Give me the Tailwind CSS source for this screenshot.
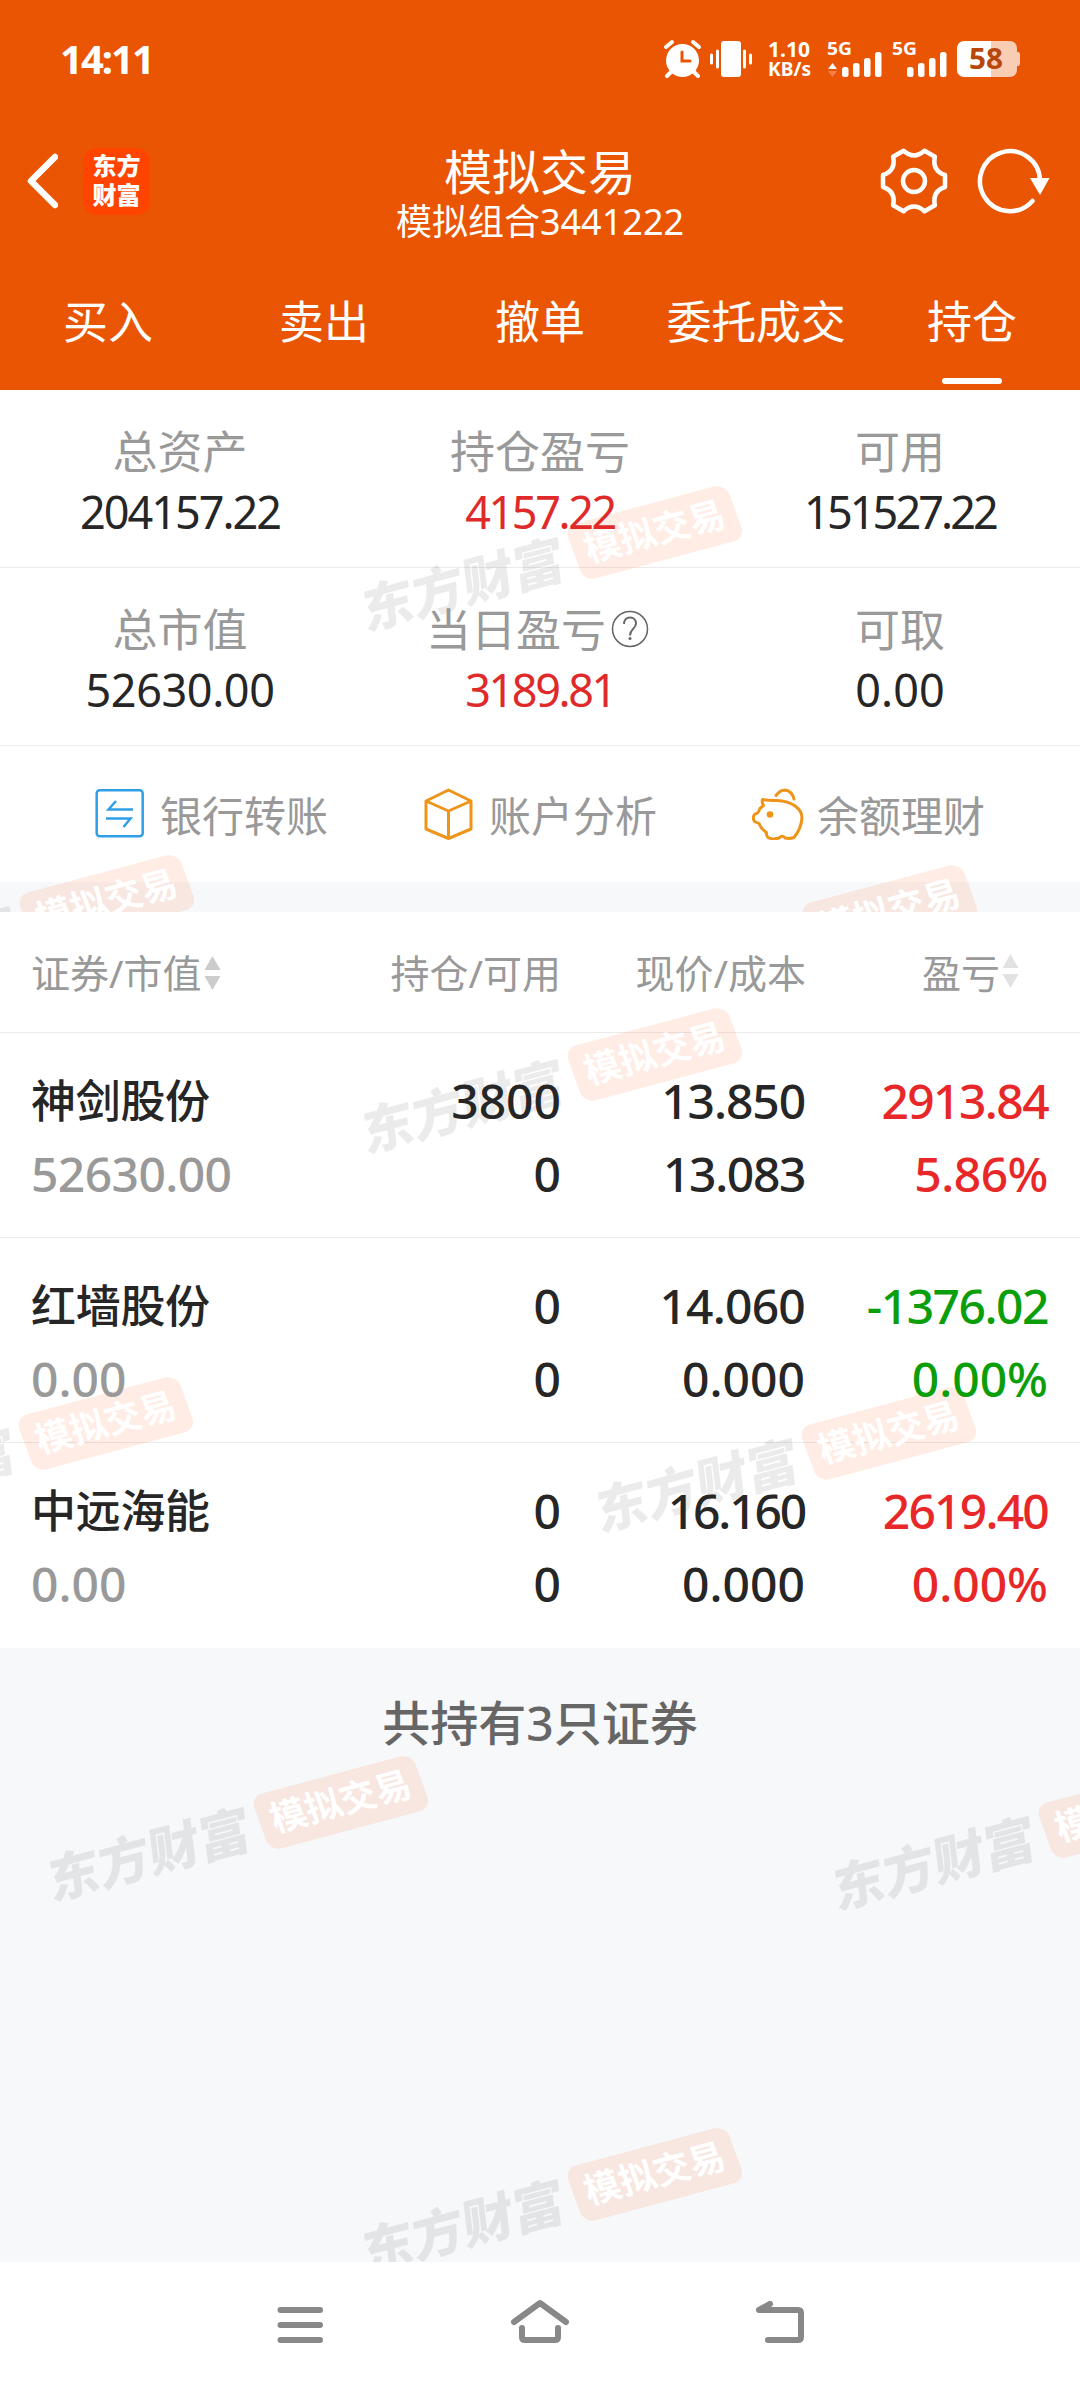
<!DOCTYPE html>
<html lang="zh-CN">
<head>
<meta charset="utf-8">
<title>模拟交易</title>
<script src="https://cdn.jsdelivr.net/npm/@tailwindcss/browser@4"></script>
</head>
<body class="w-[1080px] h-[2388px] overflow-hidden bg-[#f7f8fa] font-['Noto_Sans','Noto_Sans_CJK_SC',sans-serif] text-[#262626] flex flex-col whitespace-nowrap">

<header class="h-[390px] shrink-0 bg-[#ea5504] text-white flex flex-col">
  <!-- status bar -->
  <div class="h-[118px] flex items-center justify-between px-[60px]">
    <div class="text-[40px] font-bold leading-none tracking-[-2px]">14:11</div>
    <svg class="overflow-visible" width="356" height="40" viewBox="664 39 356 40" fill="#fff">
      <circle cx="682.500" cy="60.500" r="16.500"/>
      <path d="M666 47l6-5M699 47l-6-5M671 72l-4 4M694 72l4 4" stroke="#fff" stroke-width="4" stroke-linecap="round"/>
      <path d="M682 52v9h8" fill="none" stroke="#ea5504" stroke-width="3" stroke-linecap="round"/>
      <rect x="721" y="41" width="20" height="36" rx="3"/>
      <path d="M711.500 55v8M717.500 51v16M744.500 51v16M750.500 55v8" stroke="#fff" stroke-width="3" stroke-linecap="round"/>
      <text x="768" y="56.500" font-size="22" font-weight="700" textLength="42" lengthAdjust="spacingAndGlyphs">1.10</text>
      <text x="768" y="76" font-size="19" font-weight="700" textLength="43" lengthAdjust="spacingAndGlyphs">KB/s</text>
      <text x="827" y="55" font-size="18" font-weight="700" textLength="25" lengthAdjust="spacingAndGlyphs">5G</text>
      <path d="M828 69l4.500-6 4.500 6z"/><path d="M828 71l4.500 6 4.500-6z" fill="#f58046"/>
      <rect x="842" y="67" width="6.500" height="10" rx="2.500"/><rect x="853" y="63" width="6.500" height="14" rx="2.500"/><rect x="864" y="58" width="6.500" height="19" rx="2.500"/><rect x="875" y="52" width="6.500" height="25" rx="2.500"/>
      <text x="892" y="55" font-size="18" font-weight="700" textLength="25" lengthAdjust="spacingAndGlyphs">5G</text>
      <rect x="907" y="67" width="6.500" height="10" rx="2.500"/><rect x="918" y="63" width="6.500" height="14" rx="2.500"/><rect x="929" y="58" width="6.500" height="19" rx="2.500"/><rect x="940" y="52" width="6.500" height="25" rx="2.500"/>
      <path d="M991 41h19a7 7 0 0 1 7 7v4h1q2 0 2 3v8q0 3-2 3h-1v4a7 7 0 0 1-7 7h-19z" fill="#f9ccb4"/>
      <path d="M991 41h-27a7 7 0 0 0-7 7v22a7 7 0 0 0 7 7h27z"/>
      <text x="969" y="69" font-size="28" font-weight="700" fill="#b8470d" textLength="34" lengthAdjust="spacingAndGlyphs">58</text>
    </svg>
  </div>
  <!-- title bar -->
  <div class="h-[134px] grid grid-cols-[1fr_auto_1fr]">
    <div class="flex items-start pl-[24px] pt-[30px] gap-[25px]">
      <svg width="34" height="66" viewBox="0 0 34 66" fill="none" stroke="#fff" stroke-width="6.500" stroke-linecap="round" stroke-linejoin="round"><path d="M31 9L7 33l24 24"/></svg>
      <div class="size-[67px] rounded-[14px] bg-[#ff4400] text-[24px] leading-[29px] font-black text-center pt-[3px]">东方<br>财富</div>
    </div>
    <div class="text-center pt-[26px]">
      <div class="text-[48px] leading-[56px]">模拟交易</div>
      <div class="text-[36px] leading-[44px]">模拟组合3441222</div>
    </div>
    <div class="flex items-start justify-end pt-[27px] pr-[28px] gap-[28px]">
      <svg width="72" height="72" viewBox="-34 -36 72 72" fill="none" stroke="#fff" stroke-width="4.500" stroke-linejoin="round">
        <path d="M31-6V6Q17.900 10.350 20.900 24.300L10.500 30.300Q0 20.700-10.500 30.300L-20.900 24.300Q-17.900 10.350-31 6V-6Q-17.900-10.350-20.900-24.300L-10.500-30.300Q0-20.700 10.500-30.300L20.900-24.300Q17.900-10.350 31-6z"/>
        <circle r="11"/>
      </svg>
      <svg width="72" height="72" viewBox="-30 -36 72 72" fill="none" stroke="#fff" stroke-width="4.500" stroke-linecap="round" class="overflow-visible"><path d="M22.500 20A30 30 0 1 1 30-1"/><path d="M20-3h19.500L30 14z" fill="#fff" stroke="none"/></svg>
    </div>
  </div>
  <!-- tabs -->
  <nav class="h-[138px] grid grid-cols-5 grid-rows-[138px] text-center text-[45px] leading-[140px]">
    <div>买入</div><div>卖出</div><div>撤单</div><div class="tracking-[-0.3px]">委托成交</div>
    <div class="relative">持仓<span class="absolute left-[78px] bottom-[6px] w-[60px] h-[6px] rounded-full bg-white"></span></div>
  </nav>
</header>

<section class="relative h-[522px] shrink-0 overflow-hidden bg-white">
  <div class="h-[178px] border-b border-[#ebebeb] grid grid-cols-3 text-center pt-[32px]">
    <div class="relative z-10"><div class="text-[45px] leading-[60px] text-[#999]">总资产</div><div class="text-[45px] leading-[60px] tracking-[-2px]">204157.22</div></div>
    <div class="relative z-10"><div class="text-[45px] leading-[60px] text-[#999]">持仓盈亏</div><div class="text-[45px] leading-[60px] tracking-[-2.400px] text-[#e02a2a]">4157.22</div></div>
    <div class="relative z-10"><div class="text-[45px] leading-[60px] text-[#999]">可用</div><div class="text-[45px] leading-[60px] tracking-[-2.900px]">151527.22</div></div>
  </div>
  <div class="h-[178px] border-b border-[#ebebeb] grid grid-cols-3 text-center pt-[32px]">
    <div class="relative z-10"><div class="text-[45px] leading-[60px] text-[#999]">总市值</div><div class="text-[45px] leading-[60px] tracking-[-0.400px]">52630.00</div></div>
    <div class="relative z-10"><div class="flex items-center justify-center gap-[5px] pr-[5px] text-[45px] leading-[60px] text-[#999]">当日盈亏<svg width="38" height="38" viewBox="0 0 38 38" fill="none" stroke="#666" stroke-width="1.500" class="-translate-y-px"><circle cx="19" cy="19" r="17.500"/><path d="M13 14c0-4 2.500-6.500 6-6.500s6 2.500 6 6c0 5-6 5.500-6 12" stroke-width="2"/><circle cx="19" cy="28.500" r="1.500" fill="#666" stroke="none"/></svg></div><div class="text-[45px] leading-[60px] tracking-[-2.400px] text-[#e02a2a]">3189.81</div></div>
    <div class="relative z-10"><div class="text-[45px] leading-[60px] text-[#999]">可取</div><div class="text-[45px] leading-[60px]">0.00</div></div>
  </div>
  <div class="h-[136px] grid grid-cols-[329px_328px_328px] grid-rows-[136px] pl-[95px] text-[42px] text-[#999] leading-[140px]">
    <div class="flex items-center"><svg class="mr-[13px]" width="52" height="52" viewBox="0 0 52 52" fill="none" stroke="#2f9fe8" stroke-width="2.500"><rect x="1.700" y="2.200" width="46" height="46" rx="3"/><path d="M38 21.500H13.500l7.500-8.500M11 30.500h24.500l-7 8.500"/></svg><span class="pt-[3px]">银行转账</span></div>
    <div class="flex items-center"><svg class="mr-[13px]" width="52" height="52" viewBox="0 0 52 52" fill="none" stroke="#ee9519" stroke-width="3" stroke-linejoin="round"><path d="M24.500 2L47 13v28L24.500 50.500 2 41V13zM2 13l22.500 10L47 13M24.500 23v28"/></svg><span class="pt-[3px]">账户分析</span></div>
    <div class="flex items-center"><svg class="mr-[13px]" width="52" height="52" viewBox="0 0 52 52" fill="none" stroke="#ee9519" stroke-width="3" stroke-linecap="round" stroke-linejoin="round"><path d="M10.500 11.500Q16 12.500 25 12.500C40 13 50 21 50 30Q49 41 42 49.500q-4 1.500-9 .5-2-3.500-6 0-6 2-11-.5-2-2-1.500-5Q9 41 7 35.500L2.500 33.500Q0 29 3 26 6 26 8 20.500L11.500 17.500Q9.500 14 10.500 11.500z"/><path d="M24 7.500Q28 2 33 2 40 3 42 11"/><circle cx="18" cy="26.500" r="3.300" fill="#ee9519" stroke="none"/></svg><span class="pt-[3px]">余额理财</span></div>
  </div>
  <div class="h-[30px] bg-[#f7f8fa]"></div>
  <div class="absolute inset-0 pointer-events-none">
    <div class="wm absolute left-[355px] top-[97px]"></div>
    <div class="wm absolute left-[-193px] top-[466px]"></div>
    <div class="wm absolute left-[590px] top-[476px]"></div>
  </div>
</section>

<main class="relative h-[1350px] shrink-0 overflow-hidden">
  <div class="bg-white">
    <div class="h-[121px] border-b border-[#ebebeb] grid grid-cols-[230px_300px_245px_213px] pl-[31px] text-[39px] text-[#999] leading-[121px]">
      <div class="flex items-center">证券/市值<svg class="ml-[2px]" width="17" height="36" fill="#ccc"><path d="M0.500 15L8.500 1l8 14zM0.500 21h16l-8 14z"/></svg></div>
      <div class="text-right">持仓/可用</div>
      <div class="text-right">现价/成本</div>
      <div class="flex items-center justify-end">盈亏<svg class="ml-[2px] mt-[-4px]" width="17" height="36" fill="#e2e2e2"><path d="M0.500 15L8.500 1l8 14zM0.500 21h16l-8 14z"/></svg></div>
    </div>
    <div class="h-[205px] border-b border-[#ebebeb] pt-[31px]">
      <div class="relative z-10 grid grid-cols-[230px_300px_244px_243px] pl-[31px] text-right text-[48px] leading-[73px] font-medium">
        <div class="text-left text-[45px] tracking-[-0.300px]">神剑股份</div><div>3800</div><div class="tracking-[-1.100px]">13.850</div><div class="tracking-[-1.600px] text-[#e82828]">2913.84</div>
        <div class="text-left text-[#999] tracking-[-0.600px]">52630.00</div><div>0</div><div class="tracking-[-1.400px]">13.083</div><div class="text-[#e82828] tracking-[-0.500px]">5.86%</div>
      </div>
    </div>
    <div class="h-[205px] border-b border-[#ebebeb] pt-[31px]">
      <div class="relative z-10 grid grid-cols-[230px_300px_244px_243px] pl-[31px] text-right text-[48px] leading-[73px] font-medium">
        <div class="text-left text-[45px] tracking-[-0.300px]">红墙股份</div><div>0</div><div class="tracking-[-0.800px]">14.060</div><div class="tracking-[-1.500px] text-[#0a9e0a]">-1376.02</div>
        <div class="text-left text-[#999]">0.00</div><div>0</div><div>0.000</div><div class="text-[#0a9e0a]">0.00%</div>
      </div>
    </div>
    <div class="h-[205px] pt-[31px]">
      <div class="relative z-10 grid grid-cols-[230px_300px_244px_243px] pl-[31px] text-right text-[48px] leading-[73px] font-medium">
        <div class="text-left text-[45px] tracking-[-0.300px]">中远海能</div><div>0</div><div class="tracking-[-2.200px]">16.160</div><div class="tracking-[-1.800px] text-[#e82828]">2619.40</div>
        <div class="text-left text-[#999]">0.00</div><div>0</div><div>0.000</div><div class="text-[#e82828]">0.00%</div>
      </div>
    </div>
  </div>
  <div class="relative z-10 text-center text-[48px] leading-[72px] pt-[39px] font-medium text-[#666]">共持有3只证券</div>

  <div class="absolute inset-0 pointer-events-none">
    <div class="wm absolute left-[355px] top-[97px]"></div>
    <div class="wm absolute left-[-194px] top-[466px]"></div>
    <div class="wm absolute left-[589px] top-[476px]"></div>
    <div class="wm absolute left-[41px] top-[845px]"></div>
    <div class="wm absolute left-[826px] top-[854px]"></div>
    <div class="wm absolute left-[355px] top-[1217px]"></div>
  </div>
</main>

<footer class="h-[126px] shrink-0 bg-white flex items-center justify-center gap-[168px]">
  <svg width="72" height="60" viewBox="-36 -30 72 60" fill="none" stroke="#888" stroke-width="6" stroke-linecap="round"><path d="M-19.500-15h39.500M-19.500 0h39.500M-19.500 15h39.500"/></svg>
  <svg width="72" height="60" viewBox="-36 -30 72 60" fill="none" stroke="#888" stroke-width="6" stroke-linecap="round" stroke-linejoin="round"><path d="M-26-3L0-22 26-3M-18 3v9q0 3 3 3h30q3 0 3-3v-9"/></svg>
  <svg width="72" height="60" viewBox="-36 -30 72 60" fill="none" stroke="#888" stroke-width="6" stroke-linecap="round" stroke-linejoin="round"><path d="M-10-21l-11 6h39q3 0 3 3v24q0 3-3 3h-30"/></svg>
</footer>

<template id="mark">
  <div class="flex items-center gap-[11px] w-[394px] h-[146px] pl-[1px] -rotate-[15deg] pointer-events-none">
    <span class="font-black text-[52px] leading-[60px] text-black/8 -skew-x-[8deg]">东方财富</span>
    <span class="w-[167px] h-[58px] rounded-[12px] bg-[#ff4400]/10 text-white text-[36px] leading-[55px] font-bold text-center skew-x-[5deg]">模拟交易</span>
  </div>
</template>
<script>
  // stamp the brand watermark at every anchor
  const mark = document.getElementById('mark');
  document.querySelectorAll('.wm').forEach(el => el.append(mark.content.cloneNode(true)));
</script>
</body>
</html>
